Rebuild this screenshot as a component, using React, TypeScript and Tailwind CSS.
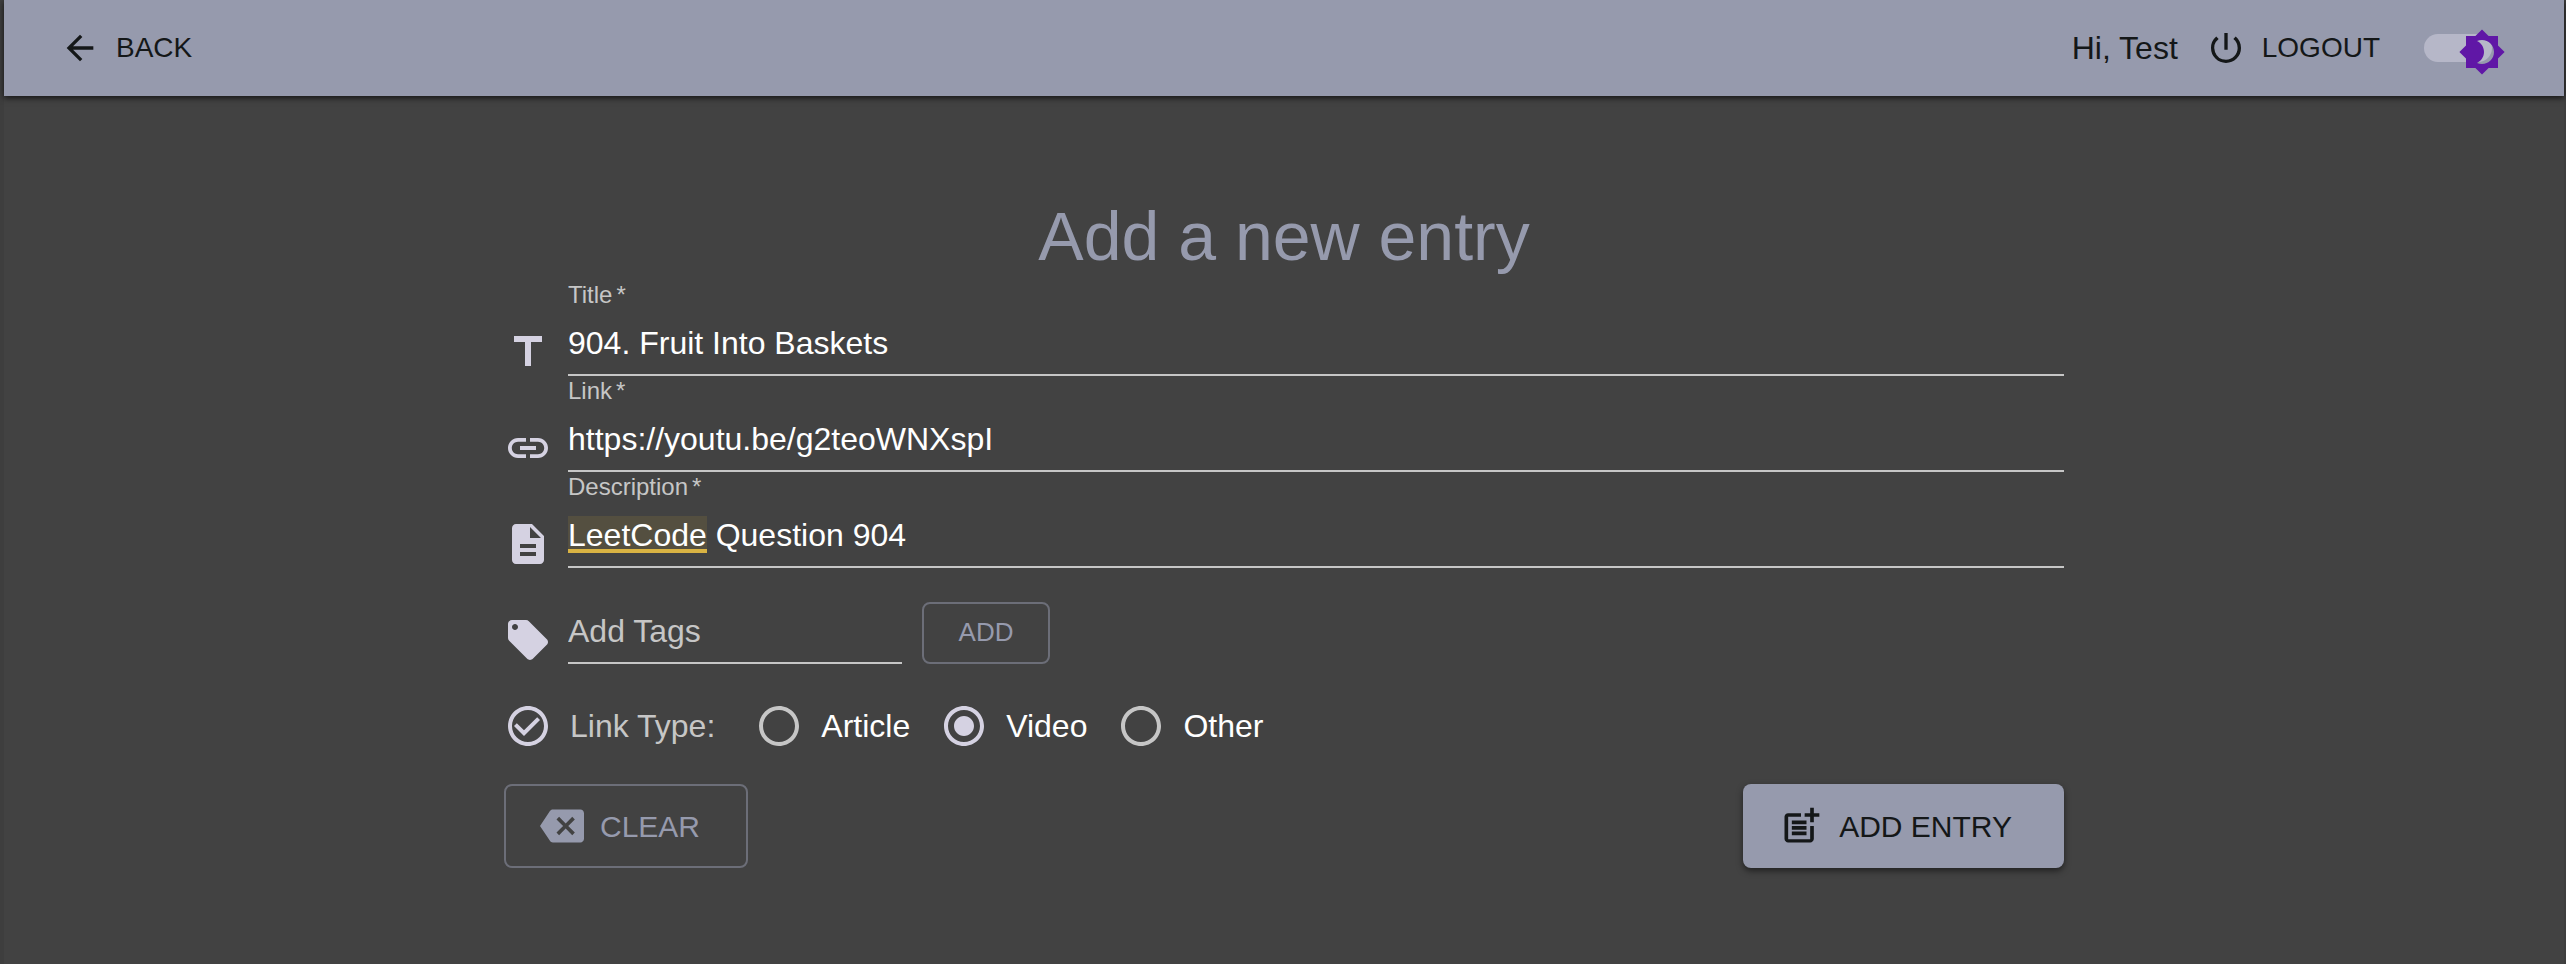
import { useState } from "react";
import type { ComponentType, ReactNode } from "react";
import {
  MdArrowBack,
  MdBackspace,
  MdBrightness4,
  MdCheckCircleOutline,
  MdDescription,
  MdLink,
  MdLocalOffer,
  MdPostAdd,
  MdPowerSettingsNew,
  MdRadioButtonChecked,
  MdRadioButtonUnchecked,
  MdTitle,
} from "react-icons/md";

type IconType = ComponentType<{ className?: string }>;

interface FieldProps {
  id: string;
  label: string;
  icon: IconType;
  value: string;
  onChange: (value: string) => void;
  mark?: ReactNode;
}

function Field({ id, label, icon: Icon, value, onChange, mark }: FieldProps) {
  return (
    <div className="flex items-end gap-4">
      <Icon className="size-12 shrink-0 text-[#d5d2e2]" />
      <div className="flex grow flex-col">
        <label htmlFor={id} className="flex h-8 items-start gap-1 text-2xl leading-[30px] text-[#c6c6c6]">
          <span>{label}</span>
          <span>*</span>
        </label>
        <div className="relative flex h-16 border-b-2 border-[#c6c6c6]">
          {mark}
          <input
            id={id}
            type="text"
            required
            value={value}
            onChange={(e) => onChange(e.target.value)}
            className="relative w-full bg-transparent text-[32px] text-white outline-none"
          />
        </div>
      </div>
    </div>
  );
}

const linkTypes = ["Article", "Video", "Other"];

export default function App() {
  const [dark, setDark] = useState(true);
  const [title, setTitle] = useState("904. Fruit Into Baskets");
  const [link, setLink] = useState("https://youtu.be/g2teoWNXspI");
  const [description, setDescription] = useState("LeetCode Question 904");
  const [tag, setTag] = useState("");
  const [linkType, setLinkType] = useState("Video");

  const clear = () => {
    setTitle("");
    setLink("");
    setDescription("");
    setTag("");
  };

  return (
    <div className="min-h-screen bg-[#3e3e3e] pr-0.5 pl-1 font-['Liberation_Sans',Arial,sans-serif]">
      <div className="min-h-screen bg-[#424242]">
        <header className="flex h-24 items-center justify-between bg-[#969aad] pr-18 pl-14 text-[#141718] shadow-[0_2px_6px_rgba(0,0,0,0.7)]">
          <button type="button" className="flex items-center gap-4 text-[28px]">
            <MdArrowBack className="size-10" />
            BACK
          </button>
          <div className="flex items-center">
            <span className="text-[32px]">Hi, Test</span>
            <button type="button" className="ml-7 flex items-center gap-4 text-[28px]">
              <MdPowerSettingsNew className="size-10" />
              LOGOUT
            </button>
            <label className="relative ml-11 flex h-7 w-17 cursor-pointer rounded-full bg-[#b6b7c8]">
              <input
                type="checkbox"
                role="switch"
                aria-label="Dark mode"
                checked={dark}
                onChange={(e) => setDark(e.target.checked)}
                className="sr-only"
              />
              <MdBrightness4 className="absolute -top-1.5 left-[34px] size-12 text-[#6017a6]" />
            </label>
          </div>
        </header>

        <main className="mx-auto max-w-[1560px] pt-[100px] pb-24">
          <h1 className="pb-1 text-center text-[68px] leading-[80px] text-[#969aad]">Add a new entry</h1>
          <form onSubmit={(e) => e.preventDefault()}>
            <Field id="title" label="Title" icon={MdTitle} value={title} onChange={setTitle} />
            <Field id="link" label="Link" icon={MdLink} value={link} onChange={setLink} />
            <Field
              id="description"
              label="Description"
              icon={MdDescription}
              value={description}
              onChange={setDescription}
              mark={
                description.startsWith("LeetCode") && (
                  <span className="absolute top-3 left-0 h-[37px] w-[139px] border-b-4 border-[#d9b343] bg-[#544f40]" />
                )
              }
            />

            <div className="flex items-end pt-8">
              <MdLocalOffer className="mr-4 size-12 text-[#d5d2e2]" />
              <input
                type="text"
                aria-label="Add Tags"
                placeholder="Add Tags"
                value={tag}
                onChange={(e) => setTag(e.target.value)}
                className="mr-5 h-16 w-[334px] border-b-2 border-[#c6c6c6] bg-transparent text-[32px] text-white outline-none placeholder:text-[#c6c6c6]"
              />
              <button
                type="button"
                className="flex h-[62px] w-32 items-center justify-center rounded-lg border-2 border-[#6c6e78] pb-0.5 text-[26px] text-[#969aad]"
              >
                ADD
              </button>
            </div>

            <div
              role="radiogroup"
              aria-labelledby="link-type-label"
              className="flex items-center pt-[38px] text-[32px]"
            >
              <MdCheckCircleOutline className="size-12 text-[#d5d2e2]" />
              <span id="link-type-label" className="mr-10 ml-[18px] text-[#c6c6c6]">
                Link Type:
              </span>
              <div className="flex gap-[30px]">
                {linkTypes.map((type) => (
                  <label key={type} className="flex cursor-pointer items-center gap-[18px] text-white">
                    <input
                      type="radio"
                      name="linkType"
                      value={type}
                      checked={linkType === type}
                      onChange={() => setLinkType(type)}
                      className="sr-only"
                    />
                    {linkType === type ? (
                      <MdRadioButtonChecked className="size-12 text-[#d5d2e2]" />
                    ) : (
                      <MdRadioButtonUnchecked className="size-12 text-[#c6c6c6]" />
                    )}
                    {type}
                  </label>
                ))}
              </div>
            </div>

            <div className="flex justify-between pt-[34px] text-[30px]">
              <button
                type="button"
                onClick={clear}
                className="flex h-21 items-center gap-4 rounded-lg border-2 border-[#6c6e78] pr-[46px] pl-[34px] text-[#969aad]"
              >
                <MdBackspace className="size-11" />
                CLEAR
              </button>
              <button
                type="submit"
                className="flex h-21 items-center gap-4 rounded-lg bg-[#969aad] pr-[52px] pl-9 text-[#141718] shadow-[0_3px_6px_rgba(0,0,0,0.5)]"
              >
                <MdPostAdd className="size-11" />
                ADD ENTRY
              </button>
            </div>
          </form>
        </main>
      </div>
    </div>
  );
}
